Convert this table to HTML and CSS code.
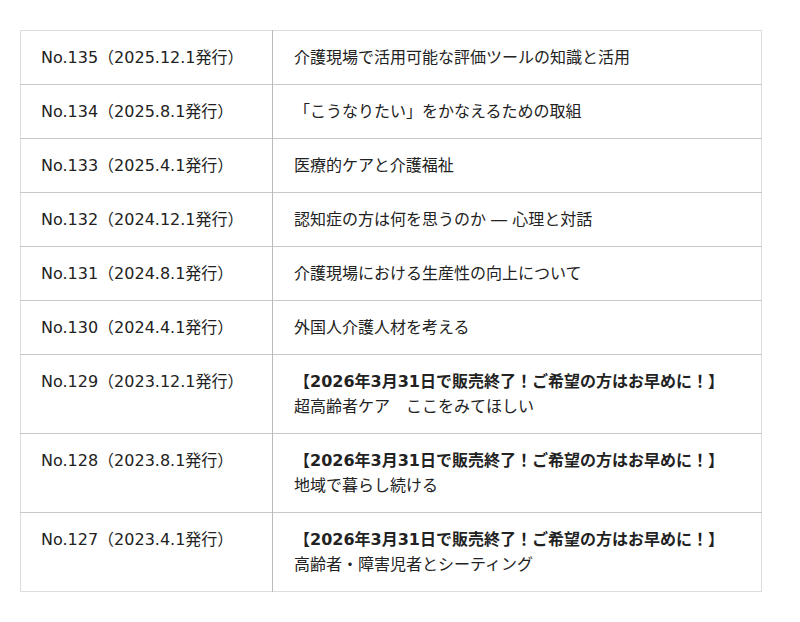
FILE: index.html
```html
<!DOCTYPE html>
<html lang="ja">
<head>
<meta charset="utf-8">
<link rel="stylesheet" href="styles.css">
</head>
<body>
<div class="wrap">
<table class="issues">
<tr><td class="no">No.135（2025.12.1発行）</td><td class="title">介護現場で活用可能な評価ツールの知識と活用</td></tr>
<tr><td class="no">No.134（2025.8.1発行）</td><td class="title">「こうなりたい」をかなえるための取組</td></tr>
<tr><td class="no">No.133（2025.4.1発行）</td><td class="title">医療的ケアと介護福祉</td></tr>
<tr><td class="no">No.132（2024.12.1発行）</td><td class="title">認知症の方は何を思うのか ― 心理と対話</td></tr>
<tr><td class="no">No.131（2024.8.1発行）</td><td class="title">介護現場における生産性の向上について</td></tr>
<tr><td class="no">No.130（2024.4.1発行）</td><td class="title">外国人介護人材を考える</td></tr>
<tr><td class="no">No.129（2023.12.1発行）</td><td class="title"><strong>【2026年3月31日で販売終了！ご希望の方はお早めに！】</strong><br>超高齢者ケア　ここをみてほしい</td></tr>
<tr><td class="no">No.128（2023.8.1発行）</td><td class="title"><strong>【2026年3月31日で販売終了！ご希望の方はお早めに！】</strong><br>地域で暮らし続ける</td></tr>
<tr><td class="no">No.127（2023.4.1発行）</td><td class="title"><strong>【2026年3月31日で販売終了！ご希望の方はお早めに！】</strong><br>高齢者・障害児者とシーティング</td></tr>
</table>
</div>
</body>
</html>
```
FILE: styles.css
```css
html, body {
  margin: 0;
  padding: 0;
  background: #fff;
}
body {
  font-family: "DejaVu Sans", "Noto Sans CJK JP", sans-serif;
  font-size: 16px;
  color: #222;
}
.wrap {
  padding: 30px 38px 0 20px;
}
.issues {
  width: 742px;
  border-collapse: collapse;
  border: 1px solid #ddd;
}
.issues td {
  border-top: 1px solid #c8c8c8;
  padding: 14px 20px 14px 20px;
  line-height: 25px;
  vertical-align: top;
  text-align: left;
}
.issues tr:first-child td {
  border-top: 1px solid #ddd;
}
.issues td.no {
  width: 211px;
  border-right: 1px solid #bbb;
}
.issues td.title {
  padding-left: 21px;
}
.issues strong {
  font-weight: bold;
}
```
